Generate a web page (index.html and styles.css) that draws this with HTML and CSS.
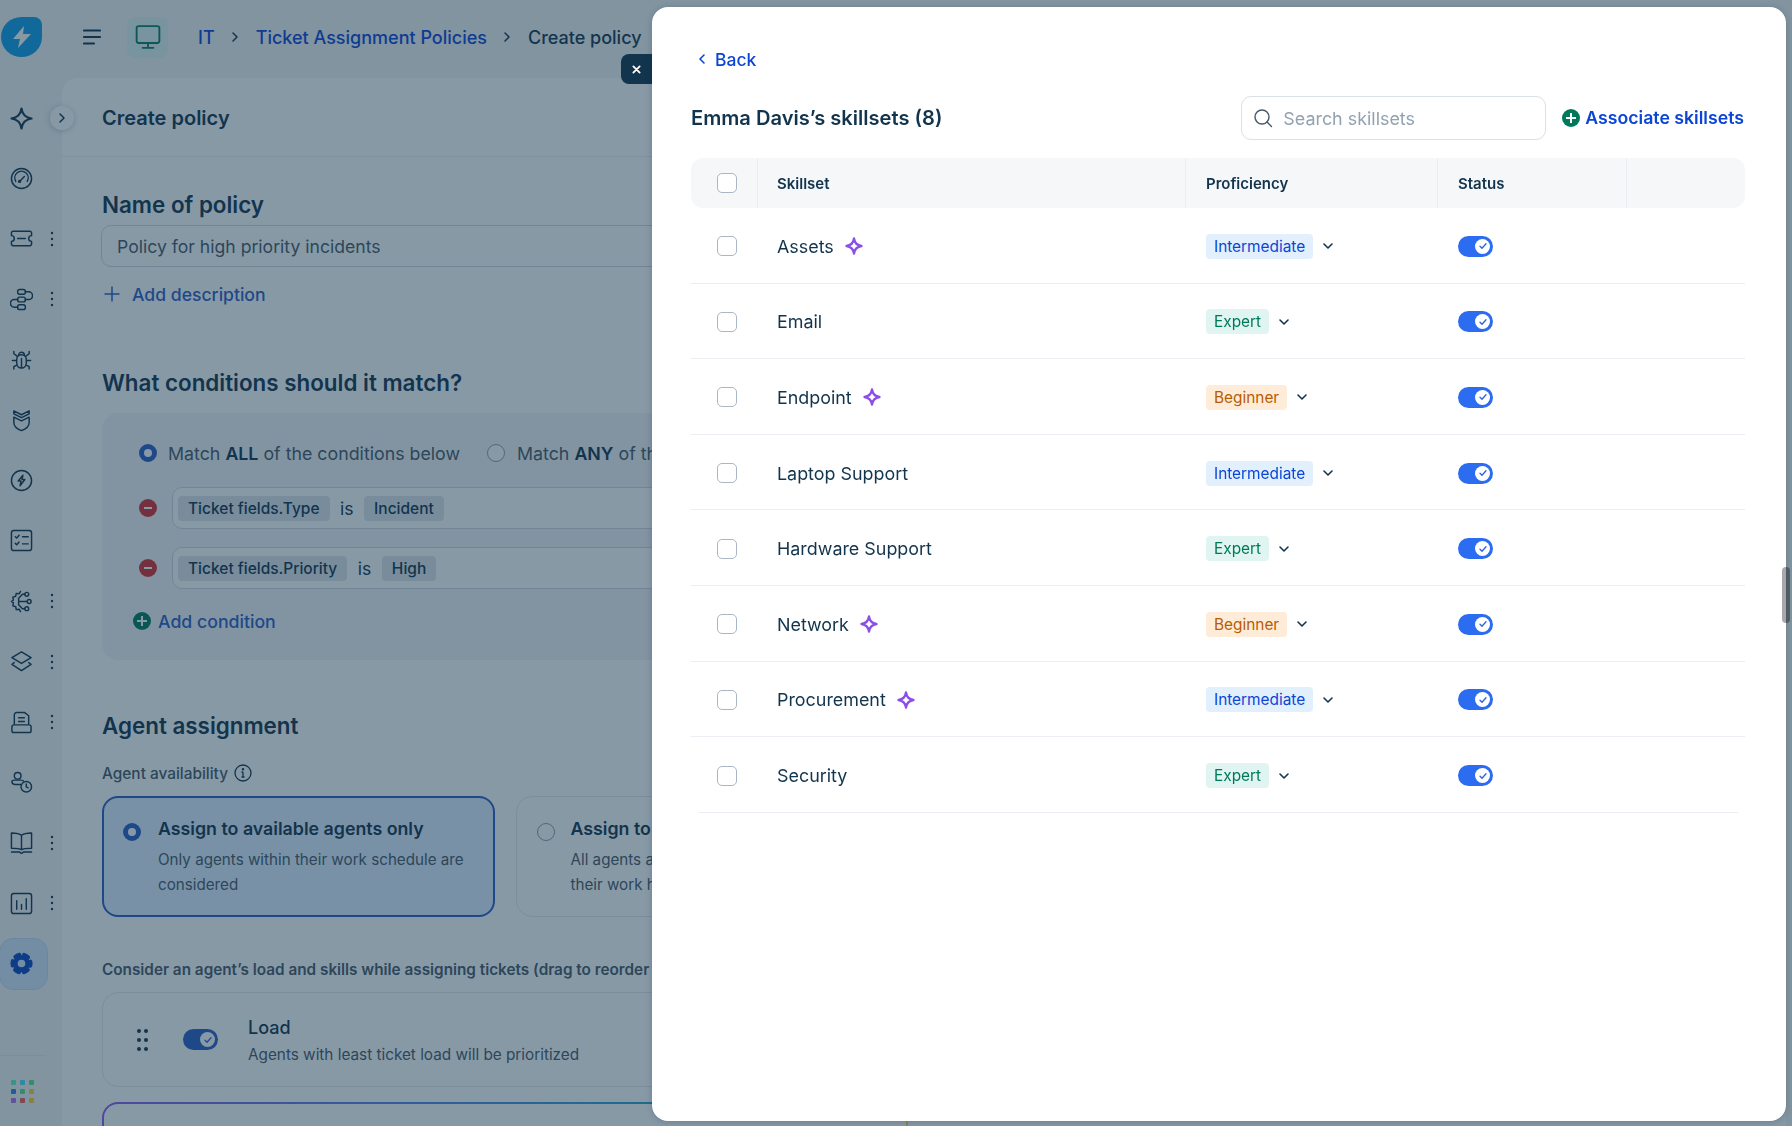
FILE: index.html
```html
<!DOCTYPE html>
<html lang="en">
<head>
    <meta charset="UTF-8">
    <meta name="viewport" content="width=device-width, initial-scale=1.0">
    <title>Create policy - Ticket Assignment Policies</title>
    <link rel="stylesheet" href="styles.css">
</head>
<body>
    <svg class="defs" width="0" height="0">
        <symbol id="chev-down" viewBox="0 0 12 12"><path d="M2 4l4 4 4-4" fill="none" stroke="currentColor" stroke-width="1.6" stroke-linecap="round" stroke-linejoin="round"/></symbol>
        <symbol id="chev-right" viewBox="0 0 12 12"><path d="M4 2l4 4-4 4" fill="none" stroke="currentColor" stroke-width="1.5" stroke-linecap="round" stroke-linejoin="round"/></symbol>
        <symbol id="sparkle" viewBox="0 0 18 18"><path d="M9 1.5C9.6 5.8 12.2 8.400 16.500 9 12.200 9.600 9.600 12.200 9 16.500 8.400 12.200 5.800 9.600 1.500 9 5.800 8.400 8.400 5.800 9 1.500z" fill="none" stroke="#8a4fe8" stroke-width="2.300" stroke-linejoin="round"/></symbol>
        <symbol id="check" viewBox="0 0 10 10"><path d="M2 5.200l2 2 4-4.400" fill="none" stroke="#2b63d9" stroke-width="1.300" stroke-linecap="round" stroke-linejoin="round"/></symbol>
        <symbol id="kebab" viewBox="0 0 4 16"><circle cx="2" cy="2" r="1.200"/><circle cx="2" cy="8" r="1.200"/><circle cx="2" cy="14" r="1.200"/></symbol>
    </svg>

    <div class="topbar">
        <div class="logo">
            <svg width="20" height="24" viewBox="0 0 20 24"><path d="M12 1L1 14h7l-2 9L19 9h-8z" fill="#fff"/></svg>
        </div>
        <svg class="menu-icon" width="18" height="16" viewBox="0 0 18 16"><path d="M1 1.500h16M1 8h16M1 14.500h10" stroke="#12344d" stroke-width="2.200" stroke-linecap="round"/></svg>
        <div class="module-icon">
            <svg width="26" height="26" viewBox="0 0 24 24" fill="none" stroke="#0b7a5e" stroke-width="1.700" stroke-linecap="round" stroke-linejoin="round"><rect x="1.500" y="2" width="21" height="15.500" rx="2"/><path d="M12 17.500v4M7 22h10"/></svg>
        </div>
        <nav class="breadcrumb">
            <a href="#" class="crumb-link">IT</a>
            <svg class="crumb-sep"><use href="#chev-right"/></svg>
            <a href="#" class="crumb-link">Ticket Assignment Policies</a>
            <svg class="crumb-sep"><use href="#chev-right"/></svg>
            <span>Create policy</span>
        </nav>
    </div>

    <div class="layout">
        <aside class="sidebar">
            <div class="side-item">
                <svg class="star" viewBox="0 0 24 24"><path d="M12 1.500C12.800 7.500 16.500 11.200 22.500 12 16.500 12.800 12.800 16.500 12 22.500 11.200 16.500 7.500 12.800 1.500 12 7.500 11.200 11.200 7.500 12 1.500z"/></svg>
            </div>
            <div class="side-item">
                <svg viewBox="0 0 24 24"><circle cx="12" cy="12" r="10.500"/><path d="M6 15a7 7 0 1 1 12 0M10.500 14.500L15 10"/><circle cx="10" cy="15" r="1"/></svg>
            </div>
            <div class="side-item">
                <svg viewBox="0 0 24 24"><path d="M3 4.500h18a2 2 0 0 1 1.500 1.500v3a3 3 0 0 0 0 6v3a2 2 0 0 1-1.500 1.500H3A2 2 0 0 1 1.500 18v-3a3 3 0 0 0 0-6V6A2 2 0 0 1 3 4.500z"/><path d="M8 12h8"/></svg>
                <svg class="kebab"><use href="#kebab"/></svg>
            </div>
            <div class="side-item">
                <svg viewBox="0 0 24 24"><rect x="8" y="1.500" width="8" height="5" rx="2"/><rect x="8" y="9.500" width="8" height="5" rx="2"/><rect x="8" y="17.500" width="8" height="5" rx="2"/><path d="M16 4h3.500a3 3 0 0 1 0 8H16M8 12H4.500a3 3 0 0 0 0 8H8"/></svg>
                <svg class="kebab"><use href="#kebab"/></svg>
            </div>
            <div class="side-item">
                <svg viewBox="0 0 24 24"><path d="M7 12a5 5 0 0 1 10 0v4a5 5 0 0 1-10 0zM12 11v10M9 7.500a3 3 0 0 1 6 0M7 13H2.500M17 13h4.500M7.500 8.500L4 6V3.500M16.500 8.500L20 6V3.500M7.500 17.500L4 19.500V22M16.500 17.500L20 19.500V22"/></svg>
            </div>
            <div class="side-item">
                <svg viewBox="0 0 24 24"><path d="M4 2l8 4 8-4v3l-8 4-8-4zM4 8.500l8 4 8-4V14c0 4-4 7-8 8.500C8 21 4 18 4 14z"/></svg>
            </div>
            <div class="side-item">
                <svg viewBox="0 0 24 24"><circle cx="12" cy="12" r="10.500"/><path d="M13.500 6.500L8.500 12.500h3l-1 5 5-6.500h-3z"/></svg>
            </div>
            <div class="side-item">
                <svg viewBox="0 0 24 24"><rect x="1.500" y="1.500" width="21" height="21" rx="2.500"/><path d="M5.500 8l1.500 1.500L9.500 6.500M5.500 15l1.500 1.500 2.500-3M13 8h6M13 15.500h6"/></svg>
            </div>
            <div class="side-item">
                <svg viewBox="0 0 24 24"><path d="M11 1.500L9.500 4 6.500 3.500 6 6.500 3 7.500 3.500 10.500 1.500 12 3.500 13.500 3 16.500 6 17.500 6.500 20.500 9.500 20 11 22.500"/><path d="M15.500 4.500H13L9 8.500V15.500L13 19.500H15.500M9 12H18"/><circle cx="17.500" cy="4.500" r="2"/><circle cx="20" cy="12" r="2"/><circle cx="17.500" cy="19.500" r="2"/></svg>
                <svg class="kebab"><use href="#kebab"/></svg>
            </div>
            <div class="side-item">
                <svg viewBox="0 0 24 24"><path d="M12 2l10 6-10 6L2 8zM4.500 13L2 15l10 6.500L22 15l-2.500-2"/></svg>
                <svg class="kebab"><use href="#kebab"/></svg>
            </div>
            <div class="side-item">
                <svg viewBox="0 0 24 24"><path d="M4.500 14V4a2.500 2.500 0 0 1 2.500-2.500h8L19.500 5v9M9 7h6M9 11h6M2 16.500a2 2 0 0 1 2-2h16a2 2 0 0 1 2 2v4a2 2 0 0 1-2 2H4a2 2 0 0 1-2-2z"/></svg>
                <svg class="kebab"><use href="#kebab"/></svg>
            </div>
            <div class="side-item">
                <svg viewBox="0 0 24 24"><circle cx="8" cy="5" r="3.500"/><path d="M11 14H5a3 3 0 0 1-3-3c0-1 1-1.500 3-1.500h6c2 0 3 .5 3 1"/><circle cx="17" cy="16.500" r="5.500"/><path d="M17 13.500v3l2 1"/></svg>
            </div>
            <div class="side-item">
                <svg viewBox="0 0 24 24"><path d="M12 4.500C10 2.500 6 2 1.500 2v16c4.500 0 8.500 0 10.500 1.500 2-1.500 6-1.500 10.500-1.500V2C18 2 14 2.500 12 4.500zM12 4.500v15M1.500 22h8.500l2 1.500 2-1.500h8.500"/></svg>
                <svg class="kebab"><use href="#kebab"/></svg>
            </div>
            <div class="side-item">
                <svg viewBox="0 0 24 24"><rect x="1.500" y="1.500" width="21" height="21" rx="2.500"/><path d="M7 9v9M12 13v5M17 7v11"/></svg>
                <svg class="kebab"><use href="#kebab"/></svg>
            </div>
            <div class="side-item active">
                <svg class="gear" viewBox="0 0 24 24"><circle cx="12" cy="12" r="6.500" stroke-width="5"/><circle cx="12" cy="12" r="9.500" stroke-width="4" stroke-dasharray="5 4.950" stroke-dashoffset="2.500"/></svg>
            </div>
            <div class="side-bottom">
                <div class="app-grid">
                    <i class="dot teal"></i><i class="dot cyan"></i><i class="dot green"></i>
                    <i class="dot blue"></i><i class="dot green"></i><i class="dot amber"></i>
                    <i class="dot purple"></i><i class="dot red"></i><i class="dot amber"></i>
                </div>
            </div>
        </aside>

        <main class="content">
            <div class="collapse-btn"><svg width="12" height="12"><use href="#chev-right"/></svg></div>
            <header class="content-header"><h1 class="page-title">Create policy</h1></header>
            <div class="form">
                <h2 class="section-title name-title">Name of policy</h2>
                <div class="name-input">Policy for high priority incidents</div>
                <a href="#" class="add-desc">
                    <svg width="16" height="16" viewBox="0 0 16 16"><path d="M8 1v14M1 8h14" stroke="#2c5cc5" stroke-width="1.500" stroke-linecap="round"/></svg>
                    Add description
                </a>

                <h2 class="section-title cond-title">What conditions should it match?</h2>
                <div class="cond-box">
                    <div class="match-row">
                        <span class="radio on"></span>
                        <span>Match <b>ALL</b> of the conditions below</span>
                        <span class="radio second"></span>
                        <span>Match <b>ANY</b> of the conditions below</span>
                    </div>
                    <div class="cond-row first">
                        <span class="minus"></span>
                        <div class="cond-field">
                            <span class="pill">Ticket fields.Type</span>
                            <span class="cond-is">is</span>
                            <span class="pill">Incident</span>
                        </div>
                    </div>
                    <div class="cond-row second-row">
                        <span class="minus"></span>
                        <div class="cond-field">
                            <span class="pill">Ticket fields.Priority</span>
                            <span class="cond-is">is</span>
                            <span class="pill">High</span>
                        </div>
                    </div>
                    <a href="#" class="add-cond">
                        <span class="plus-circle"></span>
                        Add condition
                    </a>
                </div>

                <h2 class="section-title agent-title">Agent assignment</h2>
                <div class="avail-label">
                    Agent availability
                    <svg width="18" height="18" viewBox="0 0 18 18" fill="none" stroke="#12344d" stroke-width="1.300"><circle cx="9" cy="9" r="8"/><path d="M9 8v5M7.500 13h3M7.500 8H9"/><circle cx="9" cy="5.200" r=".6"/></svg>
                </div>
                <div class="assign-cards">
                    <div class="assign-card selected">
                        <span class="radio on"></span>
                        <div>
                            <div class="assign-title">Assign to available agents only</div>
                            <p class="assign-desc">Only agents within their work schedule are considered</p>
                        </div>
                    </div>
                    <div class="assign-card">
                        <span class="radio"></span>
                        <div>
                            <div class="assign-title">Assign to all agents</div>
                            <p class="assign-desc">All agents are considered irrespective of their work hours</p>
                        </div>
                    </div>
                </div>

                <div class="consider-label">Consider an agent’s load and skills while assigning tickets (drag to reorder priority)</div>
                <div class="load-card">
                    <div class="drag-dots"><i></i><i></i><i></i><i></i><i></i><i></i></div>
                    <span class="toggle dim"><span class="knob"><svg width="10" height="10"><use href="#check"/></svg></span></span>
                    <div class="load-text">
                        <div class="load-title">Load</div>
                        <div class="load-desc">Agents with least ticket load will be prioritized</div>
                    </div>
                </div>
                <div class="gradient-card"></div>
            </div>
        </main>
    </div>

    <div class="overlay"></div>
    <div class="scroll-thumb"></div>

    <button class="close-btn" type="button">
        <svg width="9" height="9" viewBox="0 0 10 10"><path d="M1.500 1.500l7 7M8.500 1.500l-7 7" stroke="#fff" stroke-width="2" stroke-linecap="round"/></svg>
    </button>

    <section class="panel">
        <a href="#" class="back-link">
            <svg width="12" height="12" viewBox="0 0 12 12"><path d="M8 2L4 6l4 4" fill="none" stroke="currentColor" stroke-width="1.600" stroke-linecap="round" stroke-linejoin="round"/></svg>
            Back
        </a>
        <div class="panel-head">
            <h2 class="panel-title">Emma Davis’s skillsets (8)</h2>
            <div class="search-box">
                <svg width="20" height="20" viewBox="0 0 20 20" fill="none" stroke="#475867" stroke-width="1.400" stroke-linecap="round"><circle cx="9" cy="9" r="7"/><path d="M14 14l4.500 4.500"/></svg>
                <span>Search skillsets</span>
            </div>
            <a href="#" class="associate"><span class="plus-circle big"></span>Associate skillsets</a>
        </div>

        <div class="skill-table">
            <div class="skill-row head">
                <div class="cell check-cell"><span class="checkbox"></span></div>
                <div class="cell">Skillset</div>
                <div class="cell">Proficiency</div>
                <div class="cell">Status</div>
                <div class="cell"></div>
            </div>

            <div class="skill-row">
                <div class="cell check-cell"><span class="checkbox"></span></div>
                <div class="cell">Assets <svg class="sparkle"><use href="#sparkle"/></svg></div>
                <div class="cell"><span class="badge mid">Intermediate</span><svg class="caret"><use href="#chev-down"/></svg></div>
                <div class="cell"><span class="toggle"><span class="knob"><svg width="10" height="10"><use href="#check"/></svg></span></span></div>
                <div class="cell"></div>
            </div>
            <div class="skill-row">
                <div class="cell check-cell"><span class="checkbox"></span></div>
                <div class="cell">Email</div>
                <div class="cell"><span class="badge expert">Expert</span><svg class="caret"><use href="#chev-down"/></svg></div>
                <div class="cell"><span class="toggle"><span class="knob"><svg width="10" height="10"><use href="#check"/></svg></span></span></div>
                <div class="cell"></div>
            </div>
            <div class="skill-row">
                <div class="cell check-cell"><span class="checkbox"></span></div>
                <div class="cell">Endpoint <svg class="sparkle"><use href="#sparkle"/></svg></div>
                <div class="cell"><span class="badge beginner">Beginner</span><svg class="caret"><use href="#chev-down"/></svg></div>
                <div class="cell"><span class="toggle"><span class="knob"><svg width="10" height="10"><use href="#check"/></svg></span></span></div>
                <div class="cell"></div>
            </div>
            <div class="skill-row">
                <div class="cell check-cell"><span class="checkbox"></span></div>
                <div class="cell">Laptop Support</div>
                <div class="cell"><span class="badge mid">Intermediate</span><svg class="caret"><use href="#chev-down"/></svg></div>
                <div class="cell"><span class="toggle"><span class="knob"><svg width="10" height="10"><use href="#check"/></svg></span></span></div>
                <div class="cell"></div>
            </div>
            <div class="skill-row">
                <div class="cell check-cell"><span class="checkbox"></span></div>
                <div class="cell">Hardware Support</div>
                <div class="cell"><span class="badge expert">Expert</span><svg class="caret"><use href="#chev-down"/></svg></div>
                <div class="cell"><span class="toggle"><span class="knob"><svg width="10" height="10"><use href="#check"/></svg></span></span></div>
                <div class="cell"></div>
            </div>
            <div class="skill-row">
                <div class="cell check-cell"><span class="checkbox"></span></div>
                <div class="cell">Network <svg class="sparkle"><use href="#sparkle"/></svg></div>
                <div class="cell"><span class="badge beginner">Beginner</span><svg class="caret"><use href="#chev-down"/></svg></div>
                <div class="cell"><span class="toggle"><span class="knob"><svg width="10" height="10"><use href="#check"/></svg></span></span></div>
                <div class="cell"></div>
            </div>
            <div class="skill-row">
                <div class="cell check-cell"><span class="checkbox"></span></div>
                <div class="cell">Procurement <svg class="sparkle"><use href="#sparkle"/></svg></div>
                <div class="cell"><span class="badge mid">Intermediate</span><svg class="caret"><use href="#chev-down"/></svg></div>
                <div class="cell"><span class="toggle"><span class="knob"><svg width="10" height="10"><use href="#check"/></svg></span></span></div>
                <div class="cell"></div>
            </div>
            <div class="skill-row last">
                <div class="cell check-cell"><span class="checkbox"></span></div>
                <div class="cell">Security</div>
                <div class="cell"><span class="badge expert">Expert</span><svg class="caret"><use href="#chev-down"/></svg></div>
                <div class="cell"><span class="toggle"><span class="knob"><svg width="10" height="10"><use href="#check"/></svg></span></span></div>
                <div class="cell"></div>
            </div>
        </div>
    </section>
</body>
</html>
```

FILE: styles.css
```css
* {
    margin: 0;
    padding: 0;
    box-sizing: border-box;
}

body {
    font-family: Inter, 'Noto Sans', Arial, sans-serif;
    color: #12344d;
    background-color: #f2f4f3;
    height: 1126px;
    overflow: hidden;
    font-size: 16px;
}

a {
    text-decoration: none;
}

.defs {
    position: absolute;
}

/* barra superior */
.topbar {
    height: 78px;
    display: flex;
    align-items: center;
    padding-bottom: 4px;
    padding-left: 1px;
}

.logo {
    width: 41px;
    height: 40px;
    background-color: #109fe8;
    border-radius: 50% 8px 50% 50%;
    display: flex;
    align-items: center;
    justify-content: center;
}

.menu-icon {
    margin-left: 41px;
}

.module-icon {
    width: 41px;
    height: 41px;
    margin-left: 26px;
    border-radius: 8px;
    background-color: #dff4ee;
    display: flex;
    align-items: center;
    justify-content: center;
}

.breadcrumb {
    display: flex;
    align-items: center;
    margin-left: 30px;
    font-size: 18px;
    font-weight: 500;
}

.crumb-link {
    color: #0b45d6;
}

.crumb-sep {
    width: 12px;
    height: 12px;
    margin: 0 14.5px;
}

.layout {
    display: flex;
    height: 1048px;
}

/* menu lateral */
.sidebar {
    width: 62px;
    flex-shrink: 0;
    padding-top: 10px;
    display: flex;
    flex-direction: column;
}

.side-item {
    height: 60.4px;
    flex-shrink: 0;
    display: flex;
    align-items: center;
    padding-left: 10px;
    position: relative;
}

.side-item svg {
    width: 23px;
    height: 23px;
    fill: none;
    stroke: #12344d;
    stroke-width: 1.500;
    stroke-linecap: round;
    stroke-linejoin: round;
}

.side-item .star {
    stroke-width: 2.200;
}

.side-item .kebab {
    width: 4px;
    height: 16px;
    fill: #12344d;
    stroke: none;
    margin-left: 17px;
}

.side-item.active::before {
    content: "";
    position: absolute;
    left: -1px;
    top: 5px;
    width: 47px;
    height: 50px;
    border-radius: 14px;
    background-color: #d5e6fa;
    border: 1px solid #c3dbf7;
}

.side-item.active .gear {
    position: relative;
    stroke: #0b45c0;
}

.side-bottom {
    margin-top: 61px;
    border-top: 1px solid #e6e9ec;
    width: 46px;
    padding: 24px 0 0 10px;
}

.app-grid {
    display: grid;
    grid-template-columns: repeat(3, 5px);
    gap: 4px 4px;
    width: 23px;
    column-gap: 4px;
    margin-left: 1px;
}

.dot {
    width: 5px;
    height: 5px;
    border-radius: 1px;
}

.dot.teal { background-color: #60f0c8; }
.dot.cyan { background-color: #4fe0f0; }
.dot.green { background-color: #5fe090; }
.dot.blue { background-color: #2a88e0; }
.dot.amber { background-color: #ffd030; }
.dot.purple { background-color: #b070e0; }
.dot.red { background-color: #f05a5a; }

/* contenido */
.content {
    flex: 1;
    background-color: #fff;
    border-top-left-radius: 16px;
    margin-right: 6px;
    position: relative;
}

.collapse-btn {
    position: absolute;
    left: -12px;
    top: 28px;
    width: 24px;
    height: 24px;
    border-radius: 50%;
    background-color: #fff;
    box-shadow: 0 1px 6px rgba(18,52,77,0.25);
    display: flex;
    align-items: center;
    justify-content: center;
}

.content-header {
    height: 79px;
    border-bottom: 1px solid #ebeff3;
    padding-left: 40px;
    padding-top: 2px;
    display: flex;
    align-items: center;
}

.page-title {
    font-size: 20px;
    font-weight: 600;
}

.form {
    padding-left: 40px;
    width: 846px;
}

.section-title {
    font-size: 22.4px;
    font-weight: 600;
    line-height: 28px;
}

.name-title {
    padding-top: 34px;
    height: 62px;
}

.name-input {
    height: 42px;
    margin-top: 6px;
    margin-left: -1px;
    border: 1px solid #cfd7df;
    border-radius: 10px;
    padding-left: 15px;
    display: flex;
    align-items: center;
    font-size: 17.6px;
    color: #475867;
    background-color: #fff;
}

.add-desc {
    display: flex;
    align-items: center;
    gap: 12px;
    height: 24px;
    margin-top: 15px;
    font-size: 17.6px;
    font-weight: 500;
    color: #2c5cc5;
    padding-left: 2px;
}

.cond-title {
    margin-top: 63px;
}

.cond-box {
    margin-top: 16px;
    height: 247px;
    border-radius: 16px;
    background-color: #f3f5f7;
    padding: 28px 0 0 37px;
}

.match-row {
    display: flex;
    align-items: center;
    height: 24px;
    font-size: 17.8px;
    color: #475867;
    gap: 11px;
    white-space: nowrap;
}

.match-row b {
    color: #12344d;
    font-weight: 600;
}

.radio {
    width: 18px;
    height: 18px;
    border-radius: 50%;
    border: 1.5px solid #8a9aa8;
    background-color: #fff;
    flex-shrink: 0;
}

.radio.on {
    border: 5.5px solid #2c5cc5;
}

.radio.second {
    margin-left: 16px;
    margin-right: 1px;
}

.cond-row {
    display: flex;
    align-items: center;
    gap: 15px;
}

.cond-row.first {
    margin-top: 22px;
}

.cond-row.second-row {
    margin-top: 18px;
}

.minus {
    width: 18px;
    height: 18px;
    border-radius: 50%;
    background-color: #d72d30;
    position: relative;
    flex-shrink: 0;
}

.minus::after {
    content: "";
    position: absolute;
    left: 5px;
    top: 8px;
    width: 8px;
    height: 2px;
    background-color: #fff;
}

.cond-field {
    flex: 1;
    height: 42px;
    border: 1px solid #cfd7df;
    border-radius: 10px;
    background-color: #fff;
    display: flex;
    align-items: center;
    padding-left: 5px;
    gap: 10.5px;
}

.pill {
    display: inline-flex;
    align-items: center;
    height: 25px;
    padding: 0 10px;
    border-radius: 4px;
    background-color: #dfe5ea;
    font-size: 15.5px;
    font-weight: 500;
}

.cond-is {
    font-size: 17.6px;
    color: #12344d;
}

.add-cond {
    display: flex;
    align-items: center;
    gap: 7px;
    height: 24px;
    margin-top: 20px;
    margin-left: -6px;
    font-size: 17.7px;
    font-weight: 500;
    color: #2c5cc5;
}

.plus-circle {
    width: 18px;
    height: 18px;
    border-radius: 50%;
    background-color: #00795b;
    position: relative;
    display: inline-block;
    flex-shrink: 0;
}

.plus-circle::before,
.plus-circle::after {
    content: "";
    position: absolute;
    left: 50%;
    top: 50%;
    background-color: #fff;
    transform: translate(-50%, -50%);
}

.plus-circle::before {
    width: 10px;
    height: 2px;
}

.plus-circle::after {
    width: 2px;
    height: 10px;
}

.agent-title {
    margin-top: 52px;
}

.avail-label {
    display: flex;
    align-items: center;
    gap: 6px;
    height: 22px;
    margin-top: 22px;
    font-size: 15.4px;
    font-weight: 500;
    color: #475867;
}

.assign-cards {
    display: flex;
    gap: 21px;
    margin-top: 12px;
}

.assign-card {
    width: 393px;
    height: 121px;
    border: 1px solid #e3e8ed;
    border-radius: 16px;
    padding: 20px 20px 0 20px;
    display: flex;
    gap: 16px;
    background-color: #fff;
    overflow: hidden;
}

.assign-card .radio {
    margin-top: 6px;
}

.assign-card.selected {
    border: 2px solid #2c5cc5;
    background-color: #e1efff;
    padding: 19px 19px 0 19px;
    gap: 17px;
}

.assign-title {
    font-size: 17.8px;
    font-weight: 600;
    line-height: 24px;
}

.assign-desc {
    margin-top: 6px;
    font-size: 15.2px;
    line-height: 25px;
    color: #475867;
}

.consider-label {
    height: 22px;
    margin-top: 42px;
    font-size: 15.3px;
    font-weight: 600;
    line-height: 22px;
    color: #475867;
    white-space: nowrap;
}

.load-card {
    height: 95px;
    margin-top: 11px;
    border: 1px solid #e3e8ed;
    border-radius: 16px;
    display: flex;
    align-items: center;
    padding-left: 34px;
}

.drag-dots {
    display: grid;
    grid-template-columns: 3px 3px;
    gap: 5px 4px;
    width: 10px;
}

.drag-dots i {
    width: 4px;
    height: 4px;
    border-radius: 50%;
    background-color: #12344d;
}

.load-card .toggle {
    margin-left: 36px;
}

.load-text {
    margin-left: 30px;
    margin-top: 2px;
}

.load-title {
    font-size: 18px;
    font-weight: 500;
    line-height: 24px;
}

.load-desc {
    margin-top: 4px;
    font-size: 15.3px;
    line-height: 22px;
    color: #475867;
}

.gradient-card {
    height: 100px;
    margin-top: 15px;
    border-radius: 16px;
    border: 2px solid transparent;
    background: linear-gradient(#fff, #fff) padding-box, linear-gradient(90deg, #8a5cf0, #369ce0 60%, #20b090 85%, #ffe03d) border-box;
}

/* capa y panel */
.overlay {
    position: fixed;
    top: 0;
    left: 0;
    right: 0;
    bottom: 0;
    background-color: rgba(18,52,77,0.5);
}

.scroll-thumb {
    position: absolute;
    left: 1782px;
    top: 567px;
    width: 8px;
    height: 56px;
    border-radius: 4px;
    background-color: rgba(0,0,0,0.34);
    z-index: 2;
}

.close-btn {
    position: absolute;
    left: 621px;
    top: 54px;
    width: 31px;
    height: 30px;
    border: none;
    border-radius: 8px 0 0 8px;
    background-color: #12344d;
    display: flex;
    align-items: center;
    justify-content: center;
    padding-right: 1px;
}

.panel {
    position: absolute;
    left: 652px;
    top: 7px;
    width: 1134px;
    height: 1114px;
    background-color: #fff;
    border-radius: 16px;
    padding: 41px 41px 0 39px;
    box-shadow: 0 1px 6px rgba(18,52,77,0.25);
}

.back-link {
    display: flex;
    align-items: center;
    gap: 7px;
    height: 24px;
    padding-left: 5px;
    padding-bottom: 2px;
    font-size: 17.5px;
    font-weight: 500;
    color: #0b45d6;
}

.panel-head {
    display: flex;
    align-items: center;
    height: 44px;
    margin-top: 24px;
    gap: 16px;
}

.panel-title {
    flex: 1;
    font-size: 20.1px;
    font-weight: 600;
}

.search-box {
    width: 305px;
    height: 44px;
    border: 1px solid #d9e0e7;
    border-radius: 10px;
    display: flex;
    align-items: center;
    gap: 10px;
    padding-left: 11px;
    font-size: 17.9px;
    color: #92a2b1;
}

.associate {
    display: flex;
    align-items: center;
    gap: 5px;
    margin-right: 1px;
    padding-bottom: 1px;
    font-size: 17.7px;
    font-weight: 600;
    color: #0b45d6;
}

.associate .big {
    width: 18px;
    height: 18px;
}

.skill-table {
    margin-top: 18px;
}

.skill-row {
    display: grid;
    grid-template-columns: 66px 428px 252px 189px 1fr;
    height: 75.6px;
    border-bottom: 1px solid #ebeff3;
    font-size: 17.9px;
}

.skill-row.last {
    border-bottom: none;
    position: relative;
}

.skill-row.last::after {
    content: "";
    position: absolute;
    left: 7px;
    right: 7px;
    bottom: 0;
    height: 1px;
    background-color: #ebeff3;
}

.skill-row.head {
    height: 50px;
    border-bottom: none;
    border-radius: 12px;
    background-color: #f5f7f9;
    font-size: 15px;
    font-weight: 600;
}

.cell {
    display: flex;
    align-items: center;
    padding-left: 20px;
}

.skill-row:not(.head) .cell {
    padding-top: 2px;
}

.skill-row:not(.head) .cell:nth-child(3),
.skill-row:not(.head) .cell:nth-child(4) {
    padding-left: 21px;
}

.head .cell + .cell {
    border-left: 1px solid #ebeff3;
}

.head .cell:nth-child(2) {
    padding-left: 19px;
}

.cell.check-cell {
    padding-left: 26px;
}

.checkbox {
    width: 20px;
    height: 20px;
    border: 1.7px solid #a9b6c4;
    border-radius: 5px;
    background-color: #fff;
}

.sparkle {
    width: 18px;
    height: 18px;
    margin-left: 11px;
}

.badge {
    display: inline-flex;
    align-items: center;
    height: 25px;
    padding: 0 8px;
    border-radius: 4px;
    font-size: 15.4px;
}

.badge.mid {
    background-color: #e2f0fe;
    color: #0b45d6;
}

.badge.expert {
    background-color: #e0f5f1;
    color: #00795b;
}

.badge.beginner {
    background-color: #feecd8;
    color: #b85c00;
}

.caret {
    width: 12px;
    height: 12px;
    margin-left: 9px;
}

.toggle {
    width: 35px;
    height: 21px;
    border-radius: 11px;
    background-color: #2b6cf0;
    position: relative;
    display: inline-block;
    flex-shrink: 0;
}

.toggle.dim {
    background-color: #2c5cc5;
}

.knob {
    position: absolute;
    right: 3px;
    top: 3px;
    width: 15px;
    height: 15px;
    border-radius: 50%;
    background-color: #fff;
    display: flex;
    align-items: center;
    justify-content: center;
}
```
